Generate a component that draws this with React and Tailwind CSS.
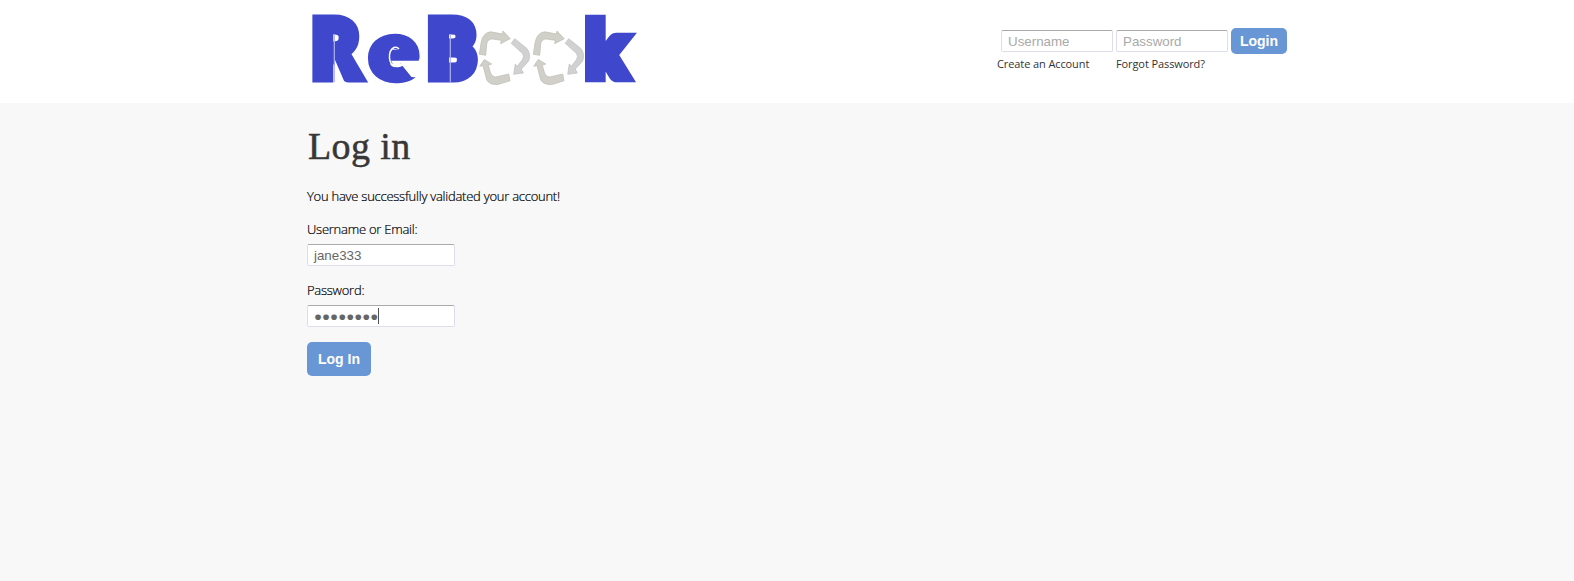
function Arrows({ x }) {
  return (
    <g transform={`translate(${x} 0)`} strokeWidth="0.7" strokeLinejoin="round">
      <path d="M479.300 54.300 L481.300 41.500 Q483.500 32.200 491 31.800 L502.300 34 L503 31 L510.300 38.700 L500.700 43.700 L501.300 40.300 L492.500 39 Q487.500 39 486.700 44 L485.700 55.300 Z" fill="#d0d0c8" stroke="#bcbcb4" />
      <path d="M514.700 38.700 L526.700 48.300 Q531.500 54 528.500 61.300 L521.300 69 L523.300 73 L513.700 74.300 L515.300 64 L517.300 66.300 L522.500 59.500 Q524.500 56 522.500 53.500 L511.300 43.300 Z" fill="#d1d1d1" stroke="#bdbdbd" />
      <path d="M484.300 59.500 L491.700 64 L488.300 65.300 L490.700 73.300 Q492 77 495.700 77 L508.700 74 L510 80.800 L498 84.500 Q489.500 85 486.800 80 L483 65.700 L479.700 66.300 Z" fill="#d0d0c8" stroke="#bcbcb4" />
    </g>
  );
}

function Logo() {
  return (
    <svg width="330" height="92" viewBox="307 0 330 92" className="block overflow-visible" role="img" aria-label="ReBook">
      <g fill="#3f48cc" stroke="#3f48cc" strokeWidth="11" strokeMiterlimit="3" fontFamily="Lato, sans-serif" fontWeight="900" fontSize="78">
        <text transform="translate(312 76.500) scale(.92 1)" x="0" y="0">R</text>
        <text transform="translate(369.500 79.300) scale(1.130 1)" x="0" y="0" fontSize="80" strokeWidth="7.500">e</text>
        <text transform="translate(427.500 76.500) scale(.93 1)" x="0" y="0">B</text>
        <text transform="translate(586 76.500) scale(.95 .97)" x="0" y="0">k</text>
      </g>
      <path d="M334.300 34 V82 M450.300 34 V82" stroke="#aeb2ec" strokeWidth="1.200" />
      <path d="M335 60 L344.500 82 H335 Z" fill="#fff" />
      <path d="M391 60.700 H422 V78 L411.500 77 L400.500 63.500 Q397 66.500 393.500 65 Z" fill="#fff" />
      <path d="M399 49 Q397 46.500 394 47.500 Q389 50 389.500 58 Q390 65 395 66" fill="none" stroke="#fff" strokeWidth="1.500" />
      <Arrows x={0} />
      <Arrows x={54} />
    </svg>
  );
}

const field = "h-[22px] rounded-[2px] border border-[#dcdfe9] border-t-[#aaaaaa] bg-white px-1.5 text-[13.333px] leading-[21px] outline-none font-['Liberation_Sans',Arial,sans-serif]";
const button = "rounded-[5px] bg-[#6997d5] font-bold text-white font-['Liberation_Sans',Arial,sans-serif]";
const copy = "leading-5 font-light tracking-[-0.25px] text-black [-webkit-text-stroke:0.2px_black]";

export default function App() {
  return (
    <div className="min-h-screen bg-[#f8f8f8] text-[13px] font-['Open_Sans',sans-serif]">
      <header className="h-[103px] bg-white">
        <div className="ml-[307px] flex w-[980px] justify-between">
          <Logo />
          <div className="pt-7">
            <div className="flex gap-[3px]">
              <input className={`${field} mt-0.5 w-28 placeholder:text-[#a9a9a9]`} placeholder="Username" />
              <input className={`${field} mt-0.5 w-28 placeholder:text-[#a9a9a9]`} placeholder="Password" />
              <button className={`${button} h-[26px] w-14 text-sm`}>Login</button>
            </div>
            <div className="-ml-1 mt-0.5 flex text-[11px] leading-4 tracking-[-0.1px] text-[#333]">
              <a className="w-[119px]">Create an Account</a>
              <a>Forgot Password?</a>
            </div>
          </div>
        </div>
      </header>
      <main className="ml-[307px] flex w-[980px] flex-col items-start">
        <h1 className="mt-5 ml-px h-12 text-[38px] leading-[47px] tracking-[0.4px] text-[#373737] font-['Liberation_Serif',serif] [-webkit-text-stroke:0.5px_#373737]">Log in</h1>
        <p className={`${copy} mt-[15px]`}>You have successfully validated your account!</p>
        <label className={`${copy} mt-[13px]`}>Username or Email:</label>
        <div className={`${field} mt-[5px] w-[148px] text-[#666]`}>jane333</div>
        <label className={`${copy} mt-3.5`}>Password:</label>
        <div className={`${field} mt-[5px] flex w-[148px] items-center text-[#666]`}>
          <span>●●●●●●●●</span>
          <span className="h-4 w-px bg-[#555]" />
        </div>
        <button className={`${button} mt-[15px] h-[34px] w-16 text-sm`}>Log In</button>
      </main>
    </div>
  );
}
